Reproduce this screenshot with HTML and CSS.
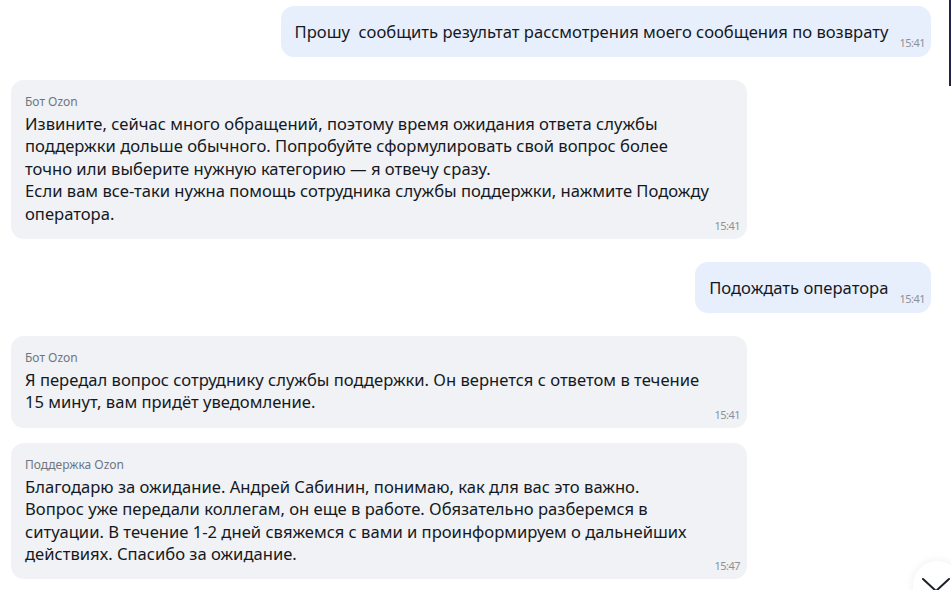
FILE: index.html
```html
<!DOCTYPE html>
<html lang="ru">
<head>
<meta charset="utf-8">
<link rel="stylesheet" href="styles.css">
</head>
<body>
<div class="chat">
  <div class="msg out first">
    <div class="text">Прошу&nbsp; сообщить результат рассмотрения моего сообщения по возврату</div>
    <div class="time">15:41</div>
  </div>

  <div class="msg in">
    <div class="sender">Бот Ozon</div>
    <div class="text">Извините, сейчас много обращений, поэтому время ожидания ответа службы<br>поддержки дольше обычного. Попробуйте сформулировать свой вопрос более<br>точно или выберите нужную категорию — я отвечу сразу.<br>Если вам все-таки нужна помощь сотрудника службы поддержки, нажмите Подожду<br>оператора.</div>
    <div class="time">15:41</div>
  </div>

  <div class="msg out">
    <div class="text">Подождать оператора</div>
    <div class="time">15:41</div>
  </div>

  <div class="msg in">
    <div class="sender">Бот Ozon</div>
    <div class="text">Я передал вопрос сотруднику службы поддержки. Он вернется с ответом в течение<br>15 минут, вам придёт уведомление.</div>
    <div class="time">15:41</div>
  </div>

  <div class="msg in next">
    <div class="sender">Поддержка Ozon</div>
    <div class="text">Благодарю за ожидание. Андрей Сабинин, понимаю, как для вас это важно.<br>Вопрос уже передали коллегам, он еще в работе. Обязательно разберемся в<br>ситуации. В течение 1-2 дней свяжемся с вами и проинформируем о дальнейших<br>действиях. Спасибо за ожидание.</div>
    <div class="time">15:47</div>
  </div>
</div>

<div class="edge"></div>

<button class="down" aria-label="Вниз">
  <svg width="30" height="16" viewBox="0 0 30 16"><path d="M2 2 L15 14 L28 2" fill="none" stroke="#1b1f2a" stroke-width="2" stroke-linecap="round" stroke-linejoin="round"/></svg>
</button>
</body>
</html>
```

FILE: styles.css
```css
html, body {
  margin: 0;
  padding: 0;
  background: #ffffff;
  overflow: hidden;
}

body {
  width: 951px;
  height: 590px;
  position: relative;
  font-family: "Noto Sans", "Open Sans", sans-serif;
  color: #15191f;
}

.chat {
  display: flex;
  flex-direction: column;
  padding: 6px 20px 0 11px;
}

.msg {
  border-radius: 13px;
  box-sizing: border-box;
}

.msg + .msg {
  margin-top: 23px;
}

.msg.next {
  margin-top: 15px;
}

.msg.out {
  align-self: flex-end;
  background: #e8effc;
  display: flex;
  align-items: flex-end;
  padding: 15px 6px 8px 14px;
}

.msg.out .text {
  font-size: 16.6px;
  line-height: 22px;
  padding-bottom: 6px;
  white-space: nowrap;
}

.msg.out .time {
  margin-left: 11px;
}

.msg.in {
  align-self: flex-start;
  width: 736px;
  background: #f0f2f5;
  padding: 14px 7px 7px 14px;
}

.sender {
  font-size: 12px;
  line-height: 16px;
  color: #6f7580;
  margin-bottom: 3px;
}

.msg.in .text {
  font-size: 16.6px;
  line-height: 22.4px;
  white-space: nowrap;
}

.time {
  font-size: 11px;
  line-height: 13px;
  color: #8b919b;
  letter-spacing: -0.5px;
}

.msg.in .time {
  text-align: right;
  margin-top: -6px;
}

.edge {
  position: absolute;
  right: 0;
  top: 0;
  width: 2px;
  height: 86px;
  background: #1e2446;
}

.down {
  position: absolute;
  left: 913px;
  top: 561px;
  width: 48px;
  height: 48px;
  border-radius: 50%;
  border: none;
  background: #ffffff;
  box-shadow: 0 0 10px rgba(0, 0, 0, 0.07);
  padding: 0;
  display: flex;
  align-items: flex-start;
  justify-content: flex-start;
}

.down svg {
  margin: 16px 0 0 8px;
}
```
